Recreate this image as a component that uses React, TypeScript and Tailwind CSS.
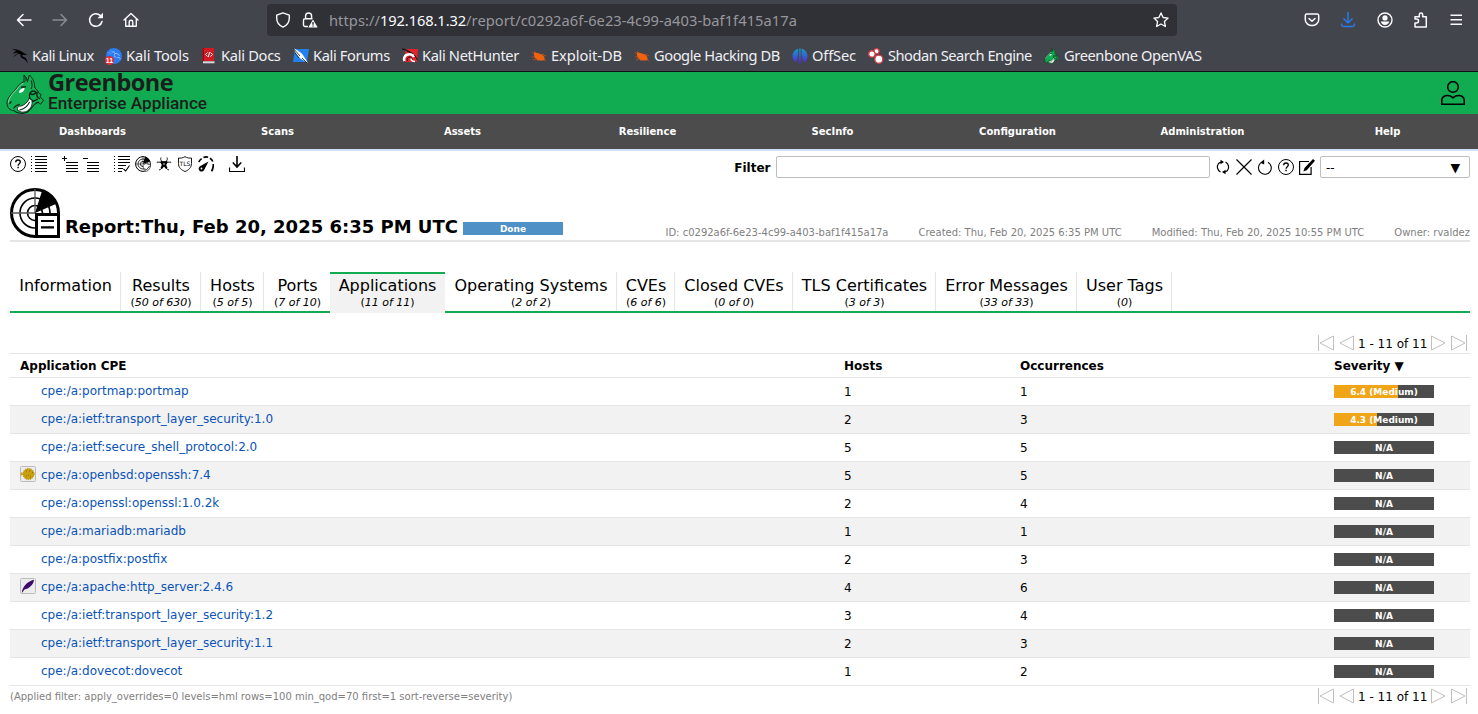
import React from "react";
import { SiKalilinux } from "react-icons/si";

type P = { children: React.ReactNode; className?: string; box?: number };

function Ico({ children, className = "", box = 16 }: P) {
  return (
    <svg viewBox={`0 0 ${box} ${box}`} fill="none" stroke="currentColor" className={`block size-4 shrink-0 ${className}`}>
      {children}
    </svg>
  );
}

/* ---------- browser toolbar ---------- */

function Toolbar() {
  return (
    <div className="flex h-10 items-center text-[#fbfbfe]">
      <div className="flex w-[267px] items-center gap-5 pl-4">
        <Ico className="stroke-[1.5]"><path d="M15 8H1.5M7 2.5 1.5 8 7 13.5" strokeLinecap="round" strokeLinejoin="round" /></Ico>
        <Ico className="stroke-[1.5] text-[#8b8c94]"><path d="M1 8h13.5M9 2.5 14.5 8 9 13.5" strokeLinecap="round" strokeLinejoin="round" /></Ico>
        <Ico className="stroke-[1.5]"><path d="M14 9.500A6.300 6.300 0 1 1 12.200 3.400" strokeLinecap="round" /><path d="M15 .8v5.500H9.500z" fill="currentColor" stroke="none" /></Ico>
        <Ico className="-ml-px stroke-[1.4]"><path d="M1 8 8 1.4 15 8M2.7 6.7v7.6h10.6V6.7M6.2 14V10a1.8 1.8 0 0 1 3.6 0v4" strokeLinecap="round" strokeLinejoin="round" /></Ico>
      </div>
      <div className="flex h-8 w-[910px] items-center rounded bg-[#303136] pl-2 pr-2">
        <Ico className="stroke-[1.4]"><path d="M8 .9 14.3 3.2V6c0 4-2.6 7.5-6.3 9.1C4.300 13.500 1.700 10 1.700 6V3.200z" strokeLinejoin="round" /></Ico>
        <Ico className="ml-[11px] stroke-[1.4]">
          <path d="M3.600 6.800V4a3 3 0 0 1 6 0v2.800M6 14.500H3A1.500 1.500 0 0 1 1.500 13V8.300A1.500 1.500 0 0 1 3 6.800h7.500" />
          <path d="M11 7.500 15.700 15.500H6.300z" fill="currentColor" stroke="none" />
          <path d="M11 10v2.800M11 13.500v1" stroke="#303136" />
        </Ico>
        <div className="ml-[11px] flex-1 whitespace-nowrap font-['Noto_Sans',sans-serif] text-[14.67px] leading-5 tracking-[0.06px] text-[#97979d]">
          https://<span className="tracking-[-0.1px] text-[#fbfbfe]">192.168.1.32</span>/report/c0292a6f-6e23-4c99-a403-baf1f415a17a
        </div>
        <Ico className="stroke-[1.3]"><path d="m8 .9 2.100 4.600 5 .6-3.700 3.400 1 5L8 12l-4.400 2.500 1-5L.9 6.100l5-.6z" strokeLinejoin="round" /></Ico>
      </div>
      <div className="flex flex-1 items-center gap-5 pl-[127px]">
        <Ico className="stroke-[1.500]"><path d="M2.800 2h10.400a1.500 1.500 0 0 1 1.500 1.500v4.300a6.700 5.800 0 0 1-13.400 0V3.500A1.500 1.500 0 0 1 2.800 2zM5 6.500l3 2.800 3-2.800" strokeLinecap="round" strokeLinejoin="round" /></Ico>
        <Ico className="-ml-[0.500px] stroke-[1.500] text-[#2a78ec]"><path d="M8 .5V11M3.800 6.800 8 11l4.200-4.200M1.700 12v1A1.700 1.700 0 0 0 3.400 14.500h9.200a1.700 1.700 0 0 0 1.700-1.500v-1" strokeLinecap="round" strokeLinejoin="round" /></Ico>
        <Ico className="ml-[1px] stroke-[1.400]"><circle cx="8" cy="8" r="7" /><circle cx="8" cy="5.900" r="2.600" fill="currentColor" stroke="none" /><path d="M3.800 9.500h8.400C11.700 11.800 10 13 8 13s-3.700-1.200-4.200-3.500z" fill="currentColor" stroke="none" /></Ico>
        <Ico className="stroke-[1.500]"><path d="M2 14.900V11h1.500a1.600 1.600 0 0 0 0-4H2V4.700h4.300V2.800a1.700 1.700 0 0 1 3.400 0v1.900h3.600v10.200z" strokeLinejoin="round" /></Ico>
        <Ico className="-ml-[1px] stroke-[1.500]"><path d="M2.500 3.200h11.500M2.500 7.700h11.500M2.500 12.200h11.500" /></Ico>
      </div>
    </div>
  );
}

function Bug() {
  return (
    <Ico>
      <g stroke="#d9560f" strokeWidth="0.7"><path d="m4 7-3-3M6 6 3 3M10 7l3-1M12 8l3-.5M4 9l-3 0M5 11l-3 1M7 12l-1 1M12 11l3 2" /></g>
      <path d="M3 4.500c3 .3 6 .8 8.500 2.500 1.500 1 2.500 3 2 5-2 1-6 .8-8.500-1C3.500 9.500 2.500 7 3 4.500z" fill="#f0620e" stroke="none" />
    </Ico>
  );
}

function KaliDragon({ className = "" }: { className?: string }) {
  return (
    <Ico className={className}>
      <path d="M0 1.500C4 .5 8 2 11 4.500L15.500 7 12 6.800c-1.500 0-2.500.7-1.500 1.700 2 .8 4 1.500 4.500 4l1 3c-1.500-1.500-2-3.500-4-4.500-2.500-1-4-2-3.500-4.500C6 4.500 3.500 4 1 6c.8-1.800 2-2.800 4-3-1.700-.8-3-1-5-1.500z" fill="currentColor" stroke="none" />
      <path d="M2 8.500C3.500 6.500 5.500 5.500 8 5.500" strokeWidth=".8" />
    </Ico>
  );
}

function KaliTools() {
  return (
    <span className="relative block size-4">
      <span className="flex size-4 items-center justify-center rounded-full bg-[#2a7af0] text-[14px] text-[#dcebff]"><SiKalilinux /></span>
      <span className="absolute -left-px bottom-[-1px] flex h-[9px] w-[9px] items-center justify-center rounded-full bg-[#e22b35] font-['Liberation_Sans',sans-serif] text-[7px] font-bold leading-none text-white">11</span>
    </span>
  );
}

const Docs = () => (
  <Ico><path d="M1.500 0H13v13H1.500z" fill="#d51923" stroke="none" /><path d="M1.500 0H3v14H1.500z" fill="#8f1118" stroke="none" /><path d="M2 13.300h11.500v2H2z" fill="#d9d9de" stroke="none" /><path d="m6.500 4.500-2 2 2 2M9.500 4.500l2 2-2 2M8.600 4 7.400 9" stroke="#fff" /></Ico>
);
const Forums = () => (
  <Ico><path d="M2 1h14l-2 13H0z" fill="#2381ee" stroke="none" /><path d="M0 0c4 2 8 4 10 7l5 8-7-4C4 8 3 4 0 0z" fill="#fff" stroke="none" /><path d="m0 0 7 8M9 10l5 5M2 5l4 5" stroke="#16181d" strokeWidth=".8" /></Ico>
);
const Hunter = () => (
  <Ico><path d="M3 1h13l-1 13H3z" fill="#e3222c" stroke="none" /><path d="M0 1c5 0 6 3 11 5" stroke="#16181d" strokeWidth="1.500" /><path d="M2.500 13a5 4.500 0 1 1 9.500-4" stroke="#fff" strokeWidth="2.600" /><path d="M5.500 13c-1-2 0-4 2.500-4s2.500 3 1 4M12.500 7l3 5" stroke="#16181d" /><path d="M9 10.500c0 2 2 3 4 3" stroke="#fff" strokeWidth="1.500" /></Ico>
);
const OffSec = () => (
  <Ico>
    <defs><linearGradient id="os" x1="0" y1="0" x2="0" y2="16" gradientUnits="userSpaceOnUse"><stop stopColor="#12a0c8" /><stop offset="1" stopColor="#5a22d8" /></linearGradient></defs>
    <path d="M6 .7C3 1.500.5 4.500.5 8s1.500 5 3.500 6.200C4.500 12 6 10 6 7zM10 .7c3 .8 5.500 3.800 5.500 7.300s-1.500 5-3.500 6.200C11.500 12 10 10 10 7zM6.800.5h1v15h-1zM8.400.5h1v15h-1z" fill="url(#os)" stroke="none" />
  </Ico>
);
const Shodan = () => (
  <Ico><g fill="#fff" stroke="#d63c42" strokeWidth="1.300"><circle cx="8.500" cy="3.300" r="2.600" /><circle cx="3.900" cy="6" r="3.200" /><circle cx="10.800" cy="11.200" r="4" /></g></Ico>
);

function DragonHead({ className = "" }: { className?: string }) {
  return (
    <svg viewBox="0 0 40 42" className={`block shrink-0 ${className}`} fill="none" stroke="#0c2616" strokeLinejoin="round" strokeLinecap="round">
      <path d="M1 31C1 27 4 23 8 19L13 13C15 10.500 17 9.500 18.500 9L18.500 2 22 7 24 2C28 6 29.500 10 29.500 15L33 19 36 22 35 24.500 38.500 28 35.500 32 33 29C31 31 28 32 26 36L21 40.500C17 42 11 41.500 8 38.500 4 38.500 1.500 36 1 31Z" fill="#14ae53" stroke="none" />
      <path d="M18.500 9V2L22 7M20.500 8V5M22 9 24 2C28 6 29.500 10 29.500 15M26 8c1 3 1 6 0 8M29.500 15 33 19l1 2 2 1-1 2.500L38.500 28l-3 4L33 30M18.500 9C15 9.500 13 13 8 19 4 23 1 27 1 31c.5 5 3 7.500 7 7.500" strokeWidth="1" />
      <path d="M17.500 10.500C14 12 12 16 8.500 19.500 5 23 3 26 2.500 30" stroke="#a4dfba" strokeWidth=".9" />
      <path d="M13.500 20.500c-.5-3 2-5 5.500-5.500.3 3-2 5-5.500 5.500z" fill="#fff" stroke="none" />
      <path d="M20 14l-4 .5M24.500 26c-1-3 0-6 1.500-7s4-.5 5 1M25 21c1 1.500 3 1 5 0M32 20c-1 3 0 5 2 6M24 26l4 3 4-2M4 31l1-1.500" strokeWidth="1.500" />
      <path d="M12 38c-1-2 0-4 3-4 4-1 7-4 9-8l2.500 2c1 5-1 8-4 10.500-3 2-8 2.500-10.500-.5z" fill="#fff" strokeWidth=".9" />
      <path d="M14 38c5-1 8-4 10-8M8 36c1-2 3-3 6-4M8 38.500c4 3.500 10 3.500 14 1.500l4-4c2-3 4-5 7-6" strokeWidth="1.100" />
    </svg>
  );
}

const bookmarks: [string, string, string, React.ReactNode][] = [
  ["Kali Linux", "w-[94px]", "tracking-[-0.42px]", <KaliDragon className="text-black" />],
  ["Kali Tools", "w-[95px]", "tracking-[-0.15px]", <KaliTools />],
  ["Kali Docs", "w-[92px]", "tracking-[-0.3px]", <Docs />],
  ["Kali Forums", "w-[109px]", "tracking-[-0.38px]", <Forums />],
  ["Kali NetHunter", "w-[129px]", "tracking-[-0.36px]", <Hunter />],
  ["Exploit-DB", "w-[103px]", "tracking-[-0.05px]", <Bug />],
  ["Google Hacking DB", "w-[158px]", "tracking-[-0.43px]", <Bug />],
  ["OffSec", "w-[76px]", "tracking-[-0.15px]", <OffSec />],
  ["Shodan Search Engine", "w-[176px]", "tracking-[-0.49px]", <Shodan />],
  ["Greenbone OpenVAS", "w-[180px]", "tracking-[-0.4px]", <DragonHead className="size-4" />],
];

function Bookmarks() {
  return (
    <div className="flex h-8 items-center border-b border-[#101014] pl-3 font-['Noto_Sans',sans-serif] text-[14.67px] text-[#f0f0f4]">
      {bookmarks.map(([label, w, track, icon]) => (
        <div key={label} className={`flex shrink-0 items-center gap-1 whitespace-nowrap ${w}`}>
          {icon}
          <span className={`pb-[2px] leading-5 ${track}`}>{label}</span>
        </div>
      ))}
    </div>
  );
}

/* ---------- page icons ---------- */

const Help = () => (
  <Ico><circle cx="8" cy="8" r="7.500" /><path d="M5.700 6.300C5.700 4.800 6.700 4 8 4s2.300.8 2.300 2.100C10.300 7.700 8.100 7.700 8.100 9.700" strokeWidth="1.300" /><path d="M7.400 10.800h1.400v1.400H7.400z" fill="currentColor" stroke="none" /></Ico>
);
const List = () => (
  <Ico className="overflow-visible"><path d="M4 .5h12M4 3.500h12M4 6.500h12M4 9.500h12M4 12.500h12M4 15.500h12" /><path d="M0 .5h1M0 3.500h1M0 6.500h1M0 9.500h1M0 12.500h1M0 15.500h1" /></Ico>
);
const ListPlus = () => (
  <Ico><path d="M4 6.500h12M4 9.500h12M4 12.500h12M4 15.500h12M0 2.500h5M2.500 0v5" /></Ico>
);
const ListMinus = () => (
  <Ico><path d="M4 6.500h12M4 9.500h12M4 12.500h12M4 15.500h12M0 2.500h5" /></Ico>
);
const Results = () => (
  <Ico><path d="M4 .5h12M4 3.500h12M4 6.500h12M4 9.500h8M4 12.500h5M4 15.500h4M0 .5h1M0 3.500h1M0 6.500h1M0 9.500h1M0 12.500h1M0 15.500h1" /><path d="m9.500 13 2.200 2L15.500 9.500" strokeWidth="1.100" /></Ico>
);
const Vuln = () => (
  <Ico><circle cx="8" cy="8" r="7.400" /><circle cx="8" cy="8" r="5" strokeWidth=".8" /><circle cx="8" cy="8" r="2.600" strokeWidth=".8" /><path d="M.5 8H8V.5" strokeWidth=".5" /><path d="M8 8 10 .8C12.500 1.500 14.500 3.300 15.200 5.500z" fill="currentColor" stroke="none" /><path d="M8 9 11 7.500l4.500 1.500c0 3-1.500 5-4 6.700C9 14.200 8 12 8 9z" fill="#fff" strokeWidth=".6" /><path d="m9.500 12.500 2 1.500 3-4" strokeWidth=".8" /></Ico>
);
const Biohazard = () => (
  <Ico>
    <path d="M5 1.500C4 4 5.500 5.700 8 5.700S12 4 11 1.500M.8 6.300C3.500 5.600 6.500 6.500 6.800 9c.2 2.500-1.300 4.300-3.800 5M15.200 6.300C12.500 5.600 9.500 6.500 9.200 9c-.2 2.500 1.300 4.300 3.800 5" strokeWidth=".9" />
    <path d="M4.800 4.500c1 1.300 5.400 1.300 6.400 0l.3 2-1.300 2.500 1.300 3-1.700.8L8 10.500l-1.800 2.300-1.700-.8 1.300-3-1.300-2.500z" fill="currentColor" stroke="none" />
    <circle cx="8" cy="8" r=".8" fill="#fff" stroke="none" />
  </Ico>
);
const Tls = () => (
  <Ico><path d="M8 .6C6 2 3.500 2.400 1.500 2v5.500c0 4 2.800 6.600 6.500 8 3.700-1.400 6.500-4 6.500-8V2c-2 .4-4.500 0-6.500-1.400z" strokeWidth=".9" /><text x="8" y="9.700" textAnchor="middle" fontSize="6" fill="currentColor" stroke="none" fontFamily="DejaVu Sans">TLS</text></Ico>
);
const Gauge = () => (
  <Ico><path d="M.8 6C1.400 4.700 2.300 3.500 3.600 2.600M5.500 1.500c1.400-.6 3-.7 4.600-.3M12 2.200c1.200.7 2.200 1.900 2.800 3.300M15.200 8c.3 2.500-.2 5-1.700 7.200" strokeWidth="1.700" /><path d="M10.500 5.500 6 14.200a2.900 2.900 0 1 1-4-4z" fill="currentColor" stroke="none" /><circle cx="3.500" cy="12.500" r=".9" fill="#fff" stroke="none" /></Ico>
);
const Download = () => (
  <Ico><path d="M8 0v10.500M3.800 6.500 8 11l4.200-4.500" strokeWidth="1.600" /><path d="M.5 11.500v4h15v-4" strokeWidth="1.200" /></Ico>
);
const Refresh = () => (
  <Ico><path d="M5.500 13A5.700 5.700 0 0 1 3.500 4.500L6 3M10.500 3a5.700 5.700 0 0 1 2 8.500L10 13" strokeWidth="1.200" /><path d="M5.500.7 9 3 5.500 5.300zM10.500 10.700 7 13l3.500 2.300z" fill="currentColor" stroke="none" /></Ico>
);
const Close = () => <Ico><path d="m.5.5 15 15M15.500.5l-15 15" strokeWidth="1.200" /></Ico>;
const Reset = () => (
  <Ico><path d="M3.500 4.200A6.400 6.400 0 1 0 11 3.300" strokeWidth="1.100" /><path d="M7.200.5v5L3 3.800z" fill="currentColor" stroke="none" /></Ico>
);
const Edit = () => (
  <Ico><path d="M10 2.500H.6v12.900h11.500V8" strokeWidth="1.200" /><path d="m14 0 2 1.700-8.300 9.500L4.300 12.500 5.500 9z" fill="currentColor" stroke="none" /></Ico>
);

function ReportIcon() {
  return (
    <svg viewBox="0 0 50 50" className="block size-[50px] shrink-0" fill="none" stroke="#000">
      <circle cx="25" cy="25" r="23.500" strokeWidth="3" />
      <circle cx="25" cy="25" r="15" strokeWidth="1.600" />
      <circle cx="25" cy="25" r="7.500" strokeWidth="1.600" />
      <path d="M1 25h24M25 1v24" stroke="#555" strokeWidth="1.300" />
      <path d="M25 25 32 3C39 5 44 9 47 15.500z" fill="#000" stroke="none" />
      <path d="M26.500 26.500h22v22h-22z" fill="#fff" strokeWidth="3" />
      <path d="M31 33h13M31 39.300h13" strokeWidth="2.200" />
    </svg>
  );
}

function UserIcon() {
  return (
    <svg viewBox="0 0 24 24" className="block size-6" fill="none" stroke="#000" strokeWidth="1.600">
      <circle cx="12" cy="6" r="5.300" />
      <path d="M.7 23.300V20c0-3.500 2.500-5.500 6-5.500 2.800 0 3.800 1 5.300 2.300 1.500-1.300 2.500-2.300 5.300-2.300 3.500 0 6 2 6 5.500v3.300z" />
    </svg>
  );
}

const menu = ["Dashboards", "Scans", "Assets", "Resilience", "SecInfo", "Configuration", "Administration", "Help"];

const tabs: [string, string, string][] = [
  ["Information", "", "w-[111px]"],
  ["Results", "50 of 630", "w-[80px]"],
  ["Hosts", "5 of 5", "w-[63px]"],
  ["Ports", "7 of 10", "w-[66px]"],
  ["Applications", "11 of 11", "w-[115px]"],
  ["Operating Systems", "2 of 2", "w-[172px]"],
  ["CVEs", "6 of 6", "w-[58px]"],
  ["Closed CVEs", "0 of 0", "w-[118px]"],
  ["TLS Certificates", "3 of 3", "w-[143px]"],
  ["Error Messages", "33 of 33", "w-[141px]"],
  ["User Tags", "0", "w-[95px]"],
];

function Tabs() {
  return (
    <div className="mx-[10px] mr-2 mt-[30px] flex h-[41px] bg-[linear-gradient(#11ab51,#11ab51)] bg-[length:100%_2px] bg-bottom bg-no-repeat">
      {tabs.map(([name, count, w]) => {
        const active = name === "Applications";
        return (
          <div
            key={name}
            className={`flex shrink-0 flex-col items-center whitespace-nowrap ${w} ${
              active ? "h-[41px] border-t-2 border-[#11ab51] bg-[#f2f2f2] pt-[2px]" : "h-[39px] border-r border-[#e5e5e5] pl-px pt-[4px]"
            } ${name === "Ports" ? "border-r-0" : ""}`}
          >
            <span className="text-[16px] leading-5">{name}</span>
            {count && <span className="text-[11px] leading-[14px]">(<i>{count}</i>)</span>}
          </div>
        );
      })}
    </div>
  );
}

const rows: [string, number, number, string, number, string?][] = [
  ["cpe:/a:portmap:portmap", 1, 1, "6.4 (Medium)", 64],
  ["cpe:/a:ietf:transport_layer_security:1.0", 2, 3, "4.3 (Medium)", 43],
  ["cpe:/a:ietf:secure_shell_protocol:2.0", 5, 5, "N/A", 0],
  ["cpe:/a:openbsd:openssh:7.4", 5, 5, "N/A", 0, "ssh"],
  ["cpe:/a:openssl:openssl:1.0.2k", 2, 4, "N/A", 0],
  ["cpe:/a:mariadb:mariadb", 1, 1, "N/A", 0],
  ["cpe:/a:postfix:postfix", 2, 3, "N/A", 0],
  ["cpe:/a:apache:http_server:2.4.6", 4, 6, "N/A", 0, "apache"],
  ["cpe:/a:ietf:transport_layer_security:1.2", 3, 4, "N/A", 0],
  ["cpe:/a:ietf:transport_layer_security:1.1", 2, 3, "N/A", 0],
  ["cpe:/a:dovecot:dovecot", 1, 2, "N/A", 0],
];

function CpeIcon({ kind }: { kind?: string }) {
  if (!kind) return <span className="size-4 shrink-0" />;
  return (
    <Ico className="relative -top-px">
      <rect x=".5" y=".5" width="15" height="15" rx="1" fill="#ececec" stroke="#bcbcbc" />
      {kind === "ssh" ? (
        <g>
          <circle cx="8.500" cy="8" r="5.600" fill="#c9a00c" stroke="#b28c0a" strokeDasharray="1 1" />
          <path d="M3.500 8 .8 6v4zM13 7l2.500 1L13 9.500z" fill="#c9a00c" stroke="none" />
          <path d="M12 6.500h1M6 5h1M8 9h1M6 10h1M10 11h1M9 5h1" stroke="#8f6f08" />
        </g>
      ) : (
        <path d="M1.800 14.500C2.500 9 7 3.500 14 1.800 13.500 7 8.500 11 4.500 11.500L2.300 14.500z" fill="#3b0a6b" stroke="none" />
      )}
    </Ico>
  );
}

function Pager() {
  return (
    <div className="flex h-4 items-center text-[12px] text-black">
      <Ico className="text-[#bfbfbf]"><path d="M.5 0v16M15.500 1v14L2 8z" /></Ico>
      <Ico className="ml-[5px] text-[#bfbfbf]"><path d="M14.500 1v14L1 8z" /></Ico>
      <span className="ml-[3px] w-[69px] whitespace-nowrap pt-[2px] text-center">1 - 11 of 11</span>
      <Ico className="ml-[3px] text-[#bfbfbf]"><path d="M1.500 1v14L15 8z" /></Ico>
      <Ico className="ml-[5px] text-[#bfbfbf]"><path d="M15.500 0v16M.5 1v14L14 8z" /></Ico>
    </div>
  );
}

export default function App() {
  return (
    <div className="h-[714px] w-[1478px] overflow-hidden bg-white font-['DejaVu_Sans',sans-serif] text-[12px] text-black">
      <div className="bg-[#43454d]"><Toolbar /><Bookmarks /></div>

      <header className="flex h-[42px] items-center bg-[#11ab51] pl-[6px] pr-[13px]">
        <DragonHead className="h-[41px] w-[39px]" />
        <div className="ml-[3px] flex h-[42px] flex-col whitespace-nowrap text-[#1b1d1c]">
          <span className="h-[21px] font-['Open_Sans','Noto_Sans',sans-serif] text-[23.5px] font-bold leading-[21px] tracking-[-0.5px]">Greenbone</span>
          <span className="font-['Roboto',sans-serif] text-[17.2px] font-medium leading-[21px]">Enterprise Appliance</span>
        </div>
        <div className="ml-auto"><UserIcon /></div>
      </header>
      <nav className="flex h-[37px] border-b-2 border-[#d2e1fb] bg-[#4c4c4c] text-[10px] font-bold text-white">
        {menu.map((m) => <div key={m} className="flex w-[185px] shrink-0 items-center justify-center">{m}</div>)}
      </nav>

      <div className="flex h-[37px] items-start pl-[10px] pr-2 pt-[5px]">
        <div className="flex gap-[15px]">
          <div className="flex gap-[5px]"><Help /><List /></div>
          <div className="flex gap-[5px]"><ListPlus /><ListMinus /></div>
          <div className="flex gap-[5px]"><Results /><Vuln /><Biohazard /><Tls /><Gauge /></div>
          <Download />
        </div>
        <div className="ml-auto flex h-[22px] items-center gap-[5px]">
          <span className="pr-px pt-[2px] font-bold -mr-[0.5px]">Filter</span>
          <div className="h-[22px] w-[434px] rounded-[2px] border border-[#bfbfbf] bg-white" />
          <Refresh /><Close /><Reset /><Help /><Edit />
          <div className="flex h-[22px] w-[150px] items-center justify-between rounded-[2px] border border-[#bfbfbf] pl-[5px] pr-[9px]">
            <span className="pt-[2px]">--</span>
            <span className="pt-[2px] text-[12.500px]">▼</span>
          </div>
        </div>
      </div>

      <section className="mx-[10px] mr-2 flex h-[54px] border-b-2 border-[#e5e5e5]">
        <ReportIcon />
        <h1 className="ml-[5px] mt-[27px] whitespace-nowrap text-[18px] font-bold leading-6">Report:Thu, Feb 20, 2025 6:35 PM UTC</h1>
        <div className="ml-[5px] mt-[34px] flex h-[13px] w-[100px] items-center justify-center bg-[#4f91c7] pt-[2px] text-[9px] font-bold leading-[11px] text-white">Done</div>
        <div className="ml-auto mt-[37px] flex gap-[30px] whitespace-nowrap text-[10px] leading-[15px] text-[#7f7f7f]">
          <span>ID: c0292a6f-6e23-4c99-a403-baf1f415a17a</span>
          <span>Created: Thu, Feb 20, 2025 6:35 PM UTC</span>
          <span>Modified: Thu, Feb 20, 2025 10:55 PM UTC</span>
          <span>Owner: rvaldez</span>
        </div>
      </section>

      <Tabs />

      <div className="flex justify-end pr-[11px] pt-[22px]"><Pager /></div>
      <div className="mx-[10px] mr-2 mt-[2px] border-t border-[#e5e5e5]">
        <div className="grid h-6 grid-cols-[824px_176px_314px_1fr] items-center border-b border-[#e5e5e5] font-bold">
          <span className="pl-[10px]">Application CPE</span>
          <span className="pl-[10px]">Hosts</span>
          <span className="pl-[10px]">Occurrences</span>
          <span className="pl-[10px]">Severity ▼</span>
        </div>
        {rows.map(([name, hosts, occ, sev, pct, kind], i) => (
          <div key={name} className={`grid h-7 grid-cols-[824px_176px_314px_1fr] items-center border-b border-[#e5e5e5] ${i % 2 ? "bg-[#f2f2f2]" : ""}`}>
            <div className="flex items-center gap-[5px] pb-[2px] pl-[10px]"><CpeIcon kind={kind} /><a className="text-[#0a53b8]">{name}</a></div>
            <span className="pl-[10px] pt-px">{hosts}</span>
            <span className="pl-[10px] pt-px">{occ}</span>
            <div className="pl-[10px]">
              <div
                className="flex h-[13px] w-[100px] items-center justify-center bg-[#4c4c4c] pt-[2px] text-[9px] font-bold leading-[11px] text-white"
                style={{ backgroundImage: `linear-gradient(90deg, #f0a519 ${pct}%, transparent ${pct}%)` }}
              >
                {sev}
              </div>
            </div>
          </div>
        ))}
      </div>
      <div className="flex items-center justify-between pl-[10px] pr-[11px] pt-[2px]">
        <span className="text-[10px] text-[#7f7f7f]">(Applied filter: apply_overrides=0 levels=hml rows=100 min_qod=70 first=1 sort-reverse=severity)</span>
        <Pager />
      </div>
    </div>
  );
}
